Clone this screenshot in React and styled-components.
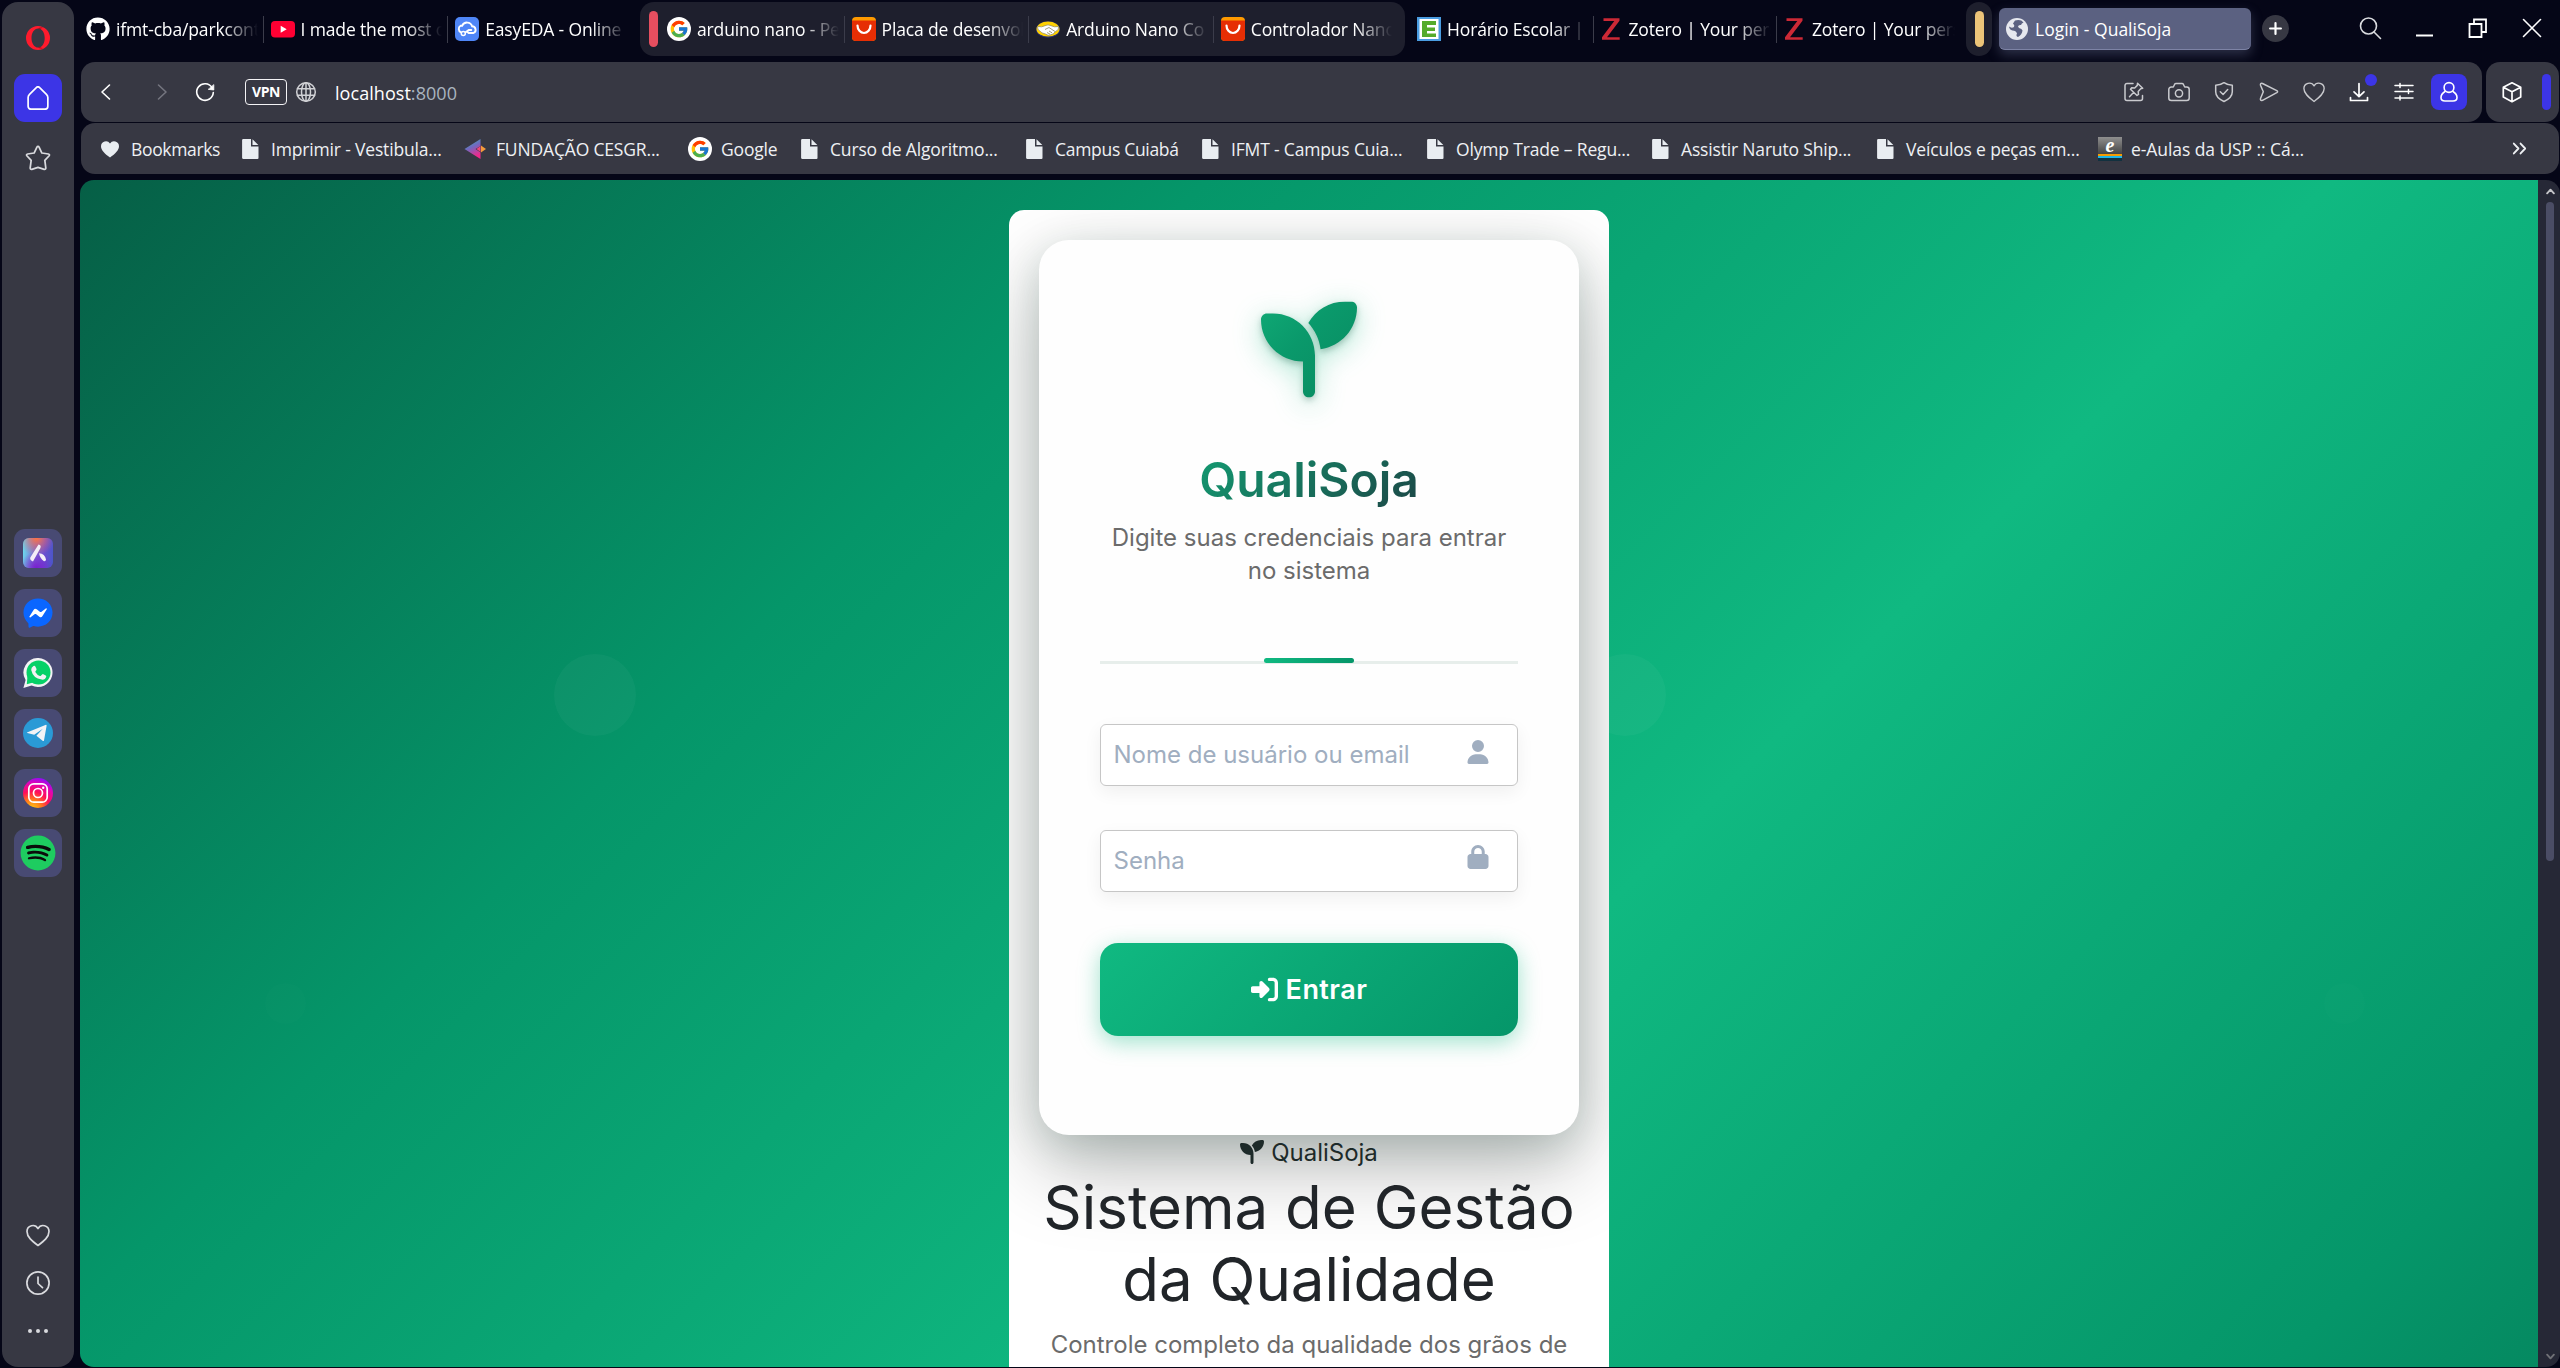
import React from "react";
import styled, { createGlobalStyle } from "styled-components";
import {
  FaSeedling,
  FaUser,
  FaLock,
  FaRightToBracket,
  FaGithub,
  FaFacebookMessenger,
  FaSpotify,
} from "react-icons/fa6";
import { FcGoogle } from "react-icons/fc";

const GlobalStyle = createGlobalStyle`
  * { box-sizing: border-box; }
  body { margin: 0; background: #050617; overflow: hidden; }
  button, input { font: inherit; }
`;

const c = {
  chrome: "#050617",
  panel: "#373843",
  island: "#1e1f2d",
  accent: "#3c35e6",
  icon: "#d9dade",
};

/* ---------- browser frame ---------- */

const Browser = styled.div`
  width: 2560px;
  height: 1368px;
  display: flex;
  padding: 2px 0 1px 2px;
  background: ${c.chrome};
  overflow: hidden;
  font-family: "Open Sans", "Noto Sans", sans-serif;
`;

const Sidebar = styled.nav`
  width: 72px;
  flex: none;
  display: flex;
  flex-direction: column;
  align-items: center;
  background: ${c.panel};
  border-radius: 16px;
  padding: 24px 0 23px;
`;

const SideButton = styled.div`
  width: 48px;
  height: 48px;
  display: flex;
  align-items: center;
  justify-content: center;
  border-radius: 11px;
  color: ${c.icon};
  background: ${(p) => p.$bg || "transparent"};
  svg { display: block; }
`;

const SideTop = styled.div`
  display: flex;
  flex-direction: column;
  align-items: center;
  gap: 12px;
  margin-top: 24px;
`;

const Messengers = styled(SideTop)`
  margin-top: 347px;
`;

const SideBottom = styled(SideTop)`
  gap: 0;
  margin-top: auto;
  margin-bottom: -11px;
`;

const Main = styled.div`
  flex: 1;
  min-width: 0;
  display: flex;
  flex-direction: column;
`;

/* ---------- tab strip ---------- */

const TabStrip = styled.div`
  height: 60px;
  display: flex;
  align-items: flex-start;
  padding-left: 5px;
`;

const TabIsland = styled.div`
  height: 54px;
  display: flex;
  align-items: center;
  border-radius: 14px;
  margin-left: ${(p) => p.$ml || 0}px;
  width: ${(p) => p.$w}px;
  padding-left: ${(p) => p.$pl || 0}px;
  background: ${(p) => (p.$filled ? c.island : "transparent")};
`;

const IslandHandle = styled.div`
  width: 9px;
  height: 36px;
  border-radius: 5px;
  flex: none;
  background: ${(p) => p.$color};
`;

const Tab = styled.div`
  width: ${(p) => p.$w || 184.6}px;
  height: 27px;
  flex: none;
  display: flex;
  align-items: center;
  gap: 6px;
  padding: 0 5px 0 7px;
  color: #fff;
  border-right: 1px solid ${(p) => (p.$last ? "transparent" : "#3b3c4a")};
  svg { flex: none; display: block; }
`;

const TabLabel = styled.span`
  flex: 1;
  font-size: 17.5px;
  line-height: 27px;
  white-space: nowrap;
  overflow: hidden;
  letter-spacing: -0.15px;
  mask-image: linear-gradient(90deg, #000 calc(100% - 36px), transparent);
`;

const ActiveTab = styled.div`
  width: 252px;
  height: 42px;
  margin: 6px 0 0 7px;
  display: flex;
  align-items: center;
  gap: 7px;
  padding-left: 7px;
  border-radius: 6px;
  background: #5b6181;
  border-bottom: 1.5px solid #7d83a5;
  box-shadow: 0 5px 12px rgba(91, 97, 129, 0.45);
  color: #fff;
  font-size: 17.5px;
  letter-spacing: 0;
`;

const NewTab = styled.div`
  width: 27px;
  height: 27px;
  margin: 13px 0 0 11px;
  border-radius: 50%;
  background: ${c.panel};
  display: flex;
  align-items: center;
  justify-content: center;
`;

const WindowControls = styled.div`
  display: flex;
  align-items: center;
  height: 52px;
  margin-left: auto;
  padding-right: 16px;
  gap: 30px;
  svg { display: block; }
`;

/* ---------- toolbars ---------- */

const ToolbarRow = styled.div`
  display: flex;
  gap: 4px;
  height: 60px;
  margin: 0 1px 1px 7px;
`;

const Toolbar = styled.div`
  flex: 1;
  display: flex;
  align-items: center;
  border-radius: 14px;
  background: ${c.panel};
  padding: 0 15px 0 13px;
`;

const MiniPanel = styled.div`
  width: 73px;
  display: flex;
  align-items: center;
  justify-content: space-between;
  border-radius: 14px;
  background: ${c.panel};
  padding: 0 8px 0 14px;
`;

const NavGlyph = styled.div`
  width: 24px;
  height: 24px;
  margin-right: ${(p) => p.$mr || 0}px;
  svg { display: block; }
`;

const VpnBadge = styled.div`
  width: 42px;
  height: 26px;
  border: 1.5px solid #f3f3f5;
  border-radius: 4px;
  color: #fff;
  font-size: 14px;
  font-weight: 700;
  letter-spacing: -0.5px;
  line-height: 24px;
  text-align: center;
  margin-right: 7px;
`;

const Address = styled.div`
  color: #fff;
  font-size: 18px;
  letter-spacing: 0.05px;
  margin-left: 17px;
  padding-top: 1px;
  span { color: #a9b4bf; }
`;

const Actions = styled.div`
  margin-left: auto;
  display: flex;
  align-items: center;
  gap: 21px;
  svg { display: block; }
`;

const ActionSlot = styled.div`
  position: relative;
  width: 24px;
  height: 24px;
`;

const NotifyDot = styled.i`
  position: absolute;
  left: 18px;
  top: -6px;
  width: 12px;
  height: 12px;
  border-radius: 50%;
  background: ${c.accent};
`;

const ProfileButton = styled.div`
  width: 36px;
  height: 36px;
  margin-left: -6px;
  border-radius: 8px;
  background: ${c.accent};
  display: flex;
  align-items: center;
  justify-content: center;
`;

const BookmarkBar = styled.div`
  height: 51px;
  flex: none;
  margin: 0 1px 6px 7px;
  display: flex;
  align-items: center;
  border-radius: 14px;
  background: ${c.panel};
  padding: 0 31px 0 17px;
`;

const Bookmark = styled.div`
  width: ${(p) => p.$w}px;
  flex: none;
  display: flex;
  align-items: center;
  gap: 9px;
  color: #eef0f3;
  font-size: 17.5px;
  white-space: nowrap;
  letter-spacing: ${(p) => p.$ls ?? -0.17}px;
  svg { flex: none; display: block; }
`;

const Overflow = styled.div`
  margin-left: auto;
  svg { display: block; }
`;

/* ---------- page viewport ---------- */

const ViewportRow = styled.div`
  flex: 1;
  min-height: 0;
  display: flex;
  margin-left: 6px;
  border-radius: 14px;
  overflow: hidden;
`;

const Viewport = styled.div`
  flex: 1;
  overflow: hidden;
  font-family: Inter, "Liberation Sans", sans-serif;
`;

const ScrollTrack = styled.div`
  width: 22px;
  background: #262836;
  display: flex;
  flex-direction: column;
  align-items: center;
  padding: 7px 0 6px 2px;
  svg { flex: none; }
`;

const ScrollThumb = styled.div`
  width: 8px;
  height: 659px;
  margin: 6px 0 auto;
  border-radius: 4px;
  background: #4b4d65;
`;

const PageBackground = styled.div`
  position: relative;
  height: 2050px;
  padding-top: 30px;
  background: linear-gradient(135deg, #065f46 0%, #059669 25%, #10b981 50%, #059669 75%, #065f46 100%);
`;

const Bubble = styled.i`
  position: absolute;
  left: ${(p) => p.$x - p.$r}px;
  top: ${(p) => p.$y - p.$r}px;
  width: ${(p) => p.$r * 2}px;
  height: ${(p) => p.$r * 2}px;
  border-radius: 50%;
  background: rgba(255, 255, 255, ${(p) => p.$a});
`;

const Container = styled.main`
  position: relative;
  width: 600px;
  height: 1900px;
  margin: 0 auto;
  padding: 30px;
  border-radius: 15px;
  background: #fff;
  overflow: hidden;
  text-align: center;
`;

const Card = styled.section`
  height: 895px;
  padding: 60px 61px;
  border-radius: 30px;
  background: #fefefe;
  box-shadow: 0 30px 84px rgba(0, 0, 0, 0.27), 0 12px 42px rgba(6, 78, 59, 0.16);
  display: flex;
  flex-direction: column;
`;

const Logo = styled.div`
  height: 97px;
  display: flex;
  justify-content: center;
  filter: drop-shadow(0 3px 3px rgba(0, 60, 40, 0.25)) drop-shadow(0 6px 14px rgba(16, 185, 129, 0.35));
`;

const Title = styled.h1`
  margin: 54px 0 0;
  font-size: 48px;
  font-weight: 600;
  line-height: 57px;
  color: transparent;
  background: linear-gradient(135deg, #10b981 0%, #1f2937 100%);
  background-clip: text;
  -webkit-background-clip: text;
`;

const Subtitle = styled.p`
  margin: 13px 0 0;
  font-size: 24px;
  line-height: 33px;
  color: #6b6b6b;
`;

const Divider = styled.div`
  display: flex;
  justify-content: center;
  margin-top: 74px;
  height: 3px;
  background: #e7eeeb;
`;

const DividerAccent = styled.div`
  width: 90px;
  height: 5px;
  margin-top: -3px;
  border-radius: 3px;
  background: linear-gradient(90deg, #10b981, #059669);
`;

const Field = styled.label`
  height: 62px;
  margin-top: ${(p) => p.$mt}px;
  display: flex;
  align-items: center;
  border: 1px solid #c6c6c6;
  border-radius: 6px;
  background: #fff;
  box-shadow: 0 6px 18px rgba(0, 0, 0, 0.06);
  padding: 0 27.5px 0 12.5px;
  color: #a0aec0;
  svg { flex: none; margin-bottom: ${(p) => p.$lift}px; }
`;

const Input = styled.input`
  flex: 1;
  min-width: 0;
  border: 0;
  padding: 0;
  margin-bottom: 2px;
  outline: none;
  background: transparent;
  font-size: 24px;
  &::placeholder { color: #a0aec0; opacity: 1; }
`;

const SubmitButton = styled.button`
  height: 93px;
  margin-top: 51px;
  border: 0;
  border-radius: 18px;
  display: flex;
  align-items: center;
  justify-content: center;
  gap: 8px;
  color: #fff;
  font-size: 27px;
  font-weight: 600;
  letter-spacing: 0.45px;
  background: linear-gradient(135deg, #10b981 0%, #059669 100%);
  box-shadow: 0 6px 22px rgba(16, 185, 129, 0.4);
`;

const Brand = styled.div`
  height: 36px;
  padding-bottom: 2px;
  display: flex;
  align-items: center;
  justify-content: center;
  gap: 7px;
  color: #1d2a29;
  font-size: 24px;
`;

const Headline = styled.h2`
  margin: 0 -10px;
  font-size: 60px;
  font-weight: 400;
  line-height: 72px;
  color: #212529;
`;

const Lead = styled.p`
  margin: 12px 0 0;
  font-size: 24px;
  line-height: 36px;
  color: #6b6b6b;
`;

/* ---------- drawn icons ---------- */

const Stroke = ({ size = 24, color = "#d9dade", w = 1.5, children }) => (
  <svg width={size} height={size} viewBox="0 0 24 24" fill="none" stroke={color} strokeWidth={w} strokeLinecap="round" strokeLinejoin="round">
    {children}
  </svg>
);

const OperaLogo = () => (
  <svg width="24" height="24" viewBox="0 0 24 24">
    <path fillRule="evenodd" fill="#ff1b2d" d="M12 0a12 12 0 1 0 0 24a12 12 0 1 0 0-24zM12.200 2.400c4 0 6.500 4.300 6.500 9.600s-2.500 9.600-6.500 9.600s-6.700-4.300-6.700-9.600s2.700-9.600 6.700-9.600z" />
    <path fill="#a70e1c" d="M12 2.600c1.400-1 3.300-1.400 5-.5c-1.800-.4-2.800.6-3.200 1.300zM12 21.400c1.400 1 3.300 1.400 5 .5c-1.800.4-2.800-.6-3.200-1.300z" />
  </svg>
);

const AriaIcon = () => (
  <svg width="30" height="30" viewBox="0 0 30 30">
    <defs>
      <linearGradient id="ariaBase" x1="0" y1=".5" x2="1" y2=".6">
        <stop offset="0" stopColor="#6cd8ec" />
        <stop offset=".4" stopColor="#7a6fd0" />
        <stop offset=".7" stopColor="#6a4fd0" />
        <stop offset="1" stopColor="#4b56c8" />
      </linearGradient>
      <radialGradient id="ariaTop" cx=".45" cy="0" r=".6">
        <stop offset="0" stopColor="#ff7340" />
        <stop offset="1" stopColor="#d0628a" stopOpacity="0" />
      </radialGradient>
      <radialGradient id="ariaLow" cx=".45" cy="1" r=".55">
        <stop offset="0" stopColor="#7a1fd0" />
        <stop offset="1" stopColor="#7a1fd0" stopOpacity="0" />
      </radialGradient>
    </defs>
    <rect width="30" height="30" rx="6" fill="url(#ariaBase)" />
    <rect width="30" height="30" rx="6" fill="url(#ariaTop)" />
    <rect width="30" height="30" rx="6" fill="url(#ariaLow)" />
    <path fill="#f3eef7" d="M15.500 6.500q3.200.6 1.800 3.700L10 23.500Q6.500 22 7.300 19.500zM16 15.200q6 .6 7 6.300q0 2-2 1.800q-4-3-5-8.100z" />
  </svg>
);

const WhatsAppIcon = () => (
  <svg width="30" height="30" viewBox="0 0 30 30">
    <path fill="#f2f2f4" d="M15.500 0A14.500 14.500 0 1 1 8.600 27.500L.4 30l2.200-8A14.500 14.500 0 0 1 15.500 0z" />
    <circle cx="15.500" cy="14.600" r="12" fill="#06d167" />
    <path fill="#06d167" d="M4.500 18L3.800 26.300L12 24z" />
    <path fill="#f2f2f4" d="M10.500 8q1.300-.6 2 .7l1 2.300q.3 1-.8 2q-.6.6-.2 1.200q1.600 2.800 4.400 3.800q.7.200 1.200-.5l1-1.100q.5-.5 1.300-.2l2.300 1.200q.8.500.5 1.400q-1 3.200-4.500 2.800Q10 20.400 8.200 12q-.2-2.600 2.300-4z" />
  </svg>
);

const InstagramIcon = () => (
  <svg width="30" height="30" viewBox="0 0 30 30" fill="none">
    <defs>
      <radialGradient id="igFill" cx=".3" cy="1.05" r="1.1">
        <stop offset="0" stopColor="#ffd014" />
        <stop offset=".3" stopColor="#ff7a1a" />
        <stop offset=".55" stopColor="#ff0f5a" />
        <stop offset=".8" stopColor="#e205b4" />
        <stop offset="1" stopColor="#8a0dff" />
      </radialGradient>
    </defs>
    <circle cx="15" cy="15" r="15" fill="url(#igFill)" />
    <rect x="5.800" y="5.800" width="18.400" height="18.400" rx="5" stroke="#fff" strokeWidth="1.700" />
    <circle cx="15" cy="15" r="4.500" stroke="#fff" strokeWidth="1.700" />
    <circle cx="20.200" cy="9.800" r="1.200" fill="#fff" />
  </svg>
);

const MessengerIcon = () => (
  <svg width="30" height="30" viewBox="0 0 30 30">
    <circle cx="15" cy="14.500" r="10" fill="#fff" />
    <FaFacebookMessenger size={30} color="#0a66ff" />
  </svg>
);

const TelegramIcon = () => (
  <svg width="30" height="30" viewBox="0 0 30 30">
    <circle cx="15" cy="15" r="15" fill="#2a9ad6" />
    <path fill="#f3f3f6" d="M4 14.500L23 6.800q.7 0 .6.900L21 22.500q-.4.900-1.400.3l-6.200-5l6.400-7l-8.600 6l-6.900-1.700q-.7-.3-.3-.6z" />
  </svg>
);

const SpotifyIcon = () => (
  <svg width="36" height="36" viewBox="0 0 36 36">
    <circle cx="18" cy="18" r="15" fill="#0b0b0b" />
    <FaSpotify size={36} color="#1ecc60" />
  </svg>
);

const YoutubeIcon = () => (
  <svg width="24" height="24" viewBox="0 0 24 24">
    <rect y="4" width="24" height="16.500" rx="4" fill="#ff0033" />
    <path fill="#fff" d="M9.700 8.700l6 3.500l-6 3.500z" />
  </svg>
);

const EasyEdaIcon = () => (
  <svg width="24" height="24" viewBox="0 0 24 24" fill="none">
    <rect width="24" height="24" rx="5" fill="#4f86f7" />
    <path d="M6 15.300a3.700 3.700 0 0 1-.4-6.600h1.600a5.300 5.300 0 0 1 9.900.6a3.500 3.500 0 0 1 1.400 6.700h-4.800l-2-1.600M9.500 16l4.300-3h2.500" stroke="#fff" strokeWidth="1.900" strokeLinecap="round" />
    <circle cx="8.300" cy="16.500" r="2" fill="#4f86f7" stroke="#fff" strokeWidth="1.500" />
  </svg>
);

const GoogleIcon = () => (
  <svg width="24" height="24" viewBox="0 0 24 24">
    <circle cx="12" cy="12" r="12" fill="#fff" />
    <FcGoogle x="2" y="2" size={20} />
  </svg>
);

const AliIcon = () => (
  <svg width="24" height="24" viewBox="0 0 24 24">
    <rect width="24" height="24" rx="4" fill="#ff9a00" />
    <path fill="#e62e04" d="M0 3.500h24V20a4 4 0 0 1-4 4H4a4 4 0 0 1-4-4z" />
    <path d="M5.500 8.500a6.500 7.500 0 0 0 13 0" fill="none" stroke="#fff" strokeWidth="2.200" strokeLinecap="round" />
  </svg>
);

const MercadoIcon = () => (
  <svg width="24" height="24" viewBox="0 0 24 24">
    <ellipse cx="12" cy="12.500" rx="12" ry="8.200" fill="#2d3277" />
    <ellipse cx="12" cy="12" rx="11.500" ry="7.600" fill="#ffd100" />
    <path fill="#fff" stroke="#8c8558" strokeWidth=".7" d="M1.500 9.500q4.500 1 7.500-.8q3-1.700 6 0q3.500 1.800 7.500.8q1 3.500-3 5q-2 3-4.500 3.200q-3 1.600-5.500-.7Q5 16 4.500 14.500Q1 13 1.500 9.500z" />
    <path fill="none" stroke="#8c8558" strokeWidth=".8" d="M9 12.500l4-2l6 4M11 15.500l3 1.600M13 14l3 1.800" />
  </svg>
);

const HorarioIcon = () => (
  <svg width="24" height="24" viewBox="0 0 24 24">
    <rect width="24" height="24" fill="#4a9ce0" />
    <rect x="2.500" y="2" width="19" height="20" fill="#fff" />
    <path fill="#55ab2c" d="M5 4h14v4h-9v2.500h8v3.500h-8v2.500h9V20H5z" />
  </svg>
);

const ZoteroIcon = () => (
  <svg width="22" height="24" viewBox="0 0 22 24">
    <path fill="#cc2936" d="M2.500 1.200h16v2.600L6 20.200h12.700v2.600H1v-2.600L13.300 3.900H2.500z" />
  </svg>
);

const EarthIcon = () => (
  <svg width="22" height="22" viewBox="0 0 22 22">
    <circle cx="11" cy="11" r="11" fill="#e6e8ee" />
    <path fill="#5b6181" d="M9 2.500q6-1.500 8.500 2q-2 .5-2.500 2.500q-2.500-.5-3 1.500l1 1.500q3 .5 3.500 2.500q-.5 4-4.500 6.500q-2.500-1-1-3.500q-1-3-4.500-3q-3-.5-3.500-4q2.500 2 5 .5q1-2-1-3.500q1-1.500 2-3z" />
  </svg>
);

const DocIcon = () => (
  <svg width="24" height="24" viewBox="0 0 24 24">
    <path fill="#e9edf1" d="M5.500 2H13v7.500h7.500V21a1 1 0 0 1-1 1h-14a1.400 1.400 0 0 1-1.400-1V3a1.200 1.200 0 0 1 1.400-1zM14.500 2.300L20.300 8h-5.800z" />
  </svg>
);

const HeartFilled = () => (
  <svg width="24" height="24" viewBox="0 0 24 24">
    <path fill="#e9edf1" d="M12 20.500C6.500 16.500 3 13 3 9.200A4.900 4.900 0 0 1 12 6.600A4.900 4.900 0 0 1 21 9.200c0 3.800-3.500 7.300-9 11.300z" />
  </svg>
);

const CesgranrioIcon = () => (
  <svg width="24" height="24" viewBox="0 0 24 24">
    <defs>
      <linearGradient id="cesg" x1="0" y1="0" x2=".4" y2="1">
        <stop offset="0" stopColor="#35c6a8" />
        <stop offset=".5" stopColor="#6f6ac0" />
        <stop offset="1" stopColor="#f0288c" />
      </linearGradient>
    </defs>
    <path fill="url(#cesg)" d="M1.500 12L17.500 2v7L12.500 12l5 3.500V22z" />
    <path fill="#f2477a" d="M13.500 12l4-3v6z" />
    <path fill="#f59a3c" d="M18 8.500l5 3.500l-5 3.500z" />
  </svg>
);

const EAulasBox = styled.div`
  width: 24px;
  height: 24px;
  flex: none;
  background: linear-gradient(
    #8f8f8f 0,
    #454545 17px,
    #f59b00 17px,
    #f59b00 19px,
    #1db4e8 19px,
    #1db4e8 21px,
    #12313f 21px
  );
  color: #fff;
  font: italic 700 20px/16px "Liberation Serif", serif;
  letter-spacing: 0;
  text-align: center;
`;

const GlobeIcon = () => (
  <Stroke color="#d0d1d5" w={1.5}>
    <circle cx="12" cy="12" r="9.300" />
    <ellipse cx="12" cy="12" rx="4.500" ry="9.300" />
    <path d="M12 2.700v18.600M3.500 8.700h17M3.500 15.300h17" />
  </Stroke>
);

const HeartPath = () => (
  <path d="M12 22.500C6 18 1 14 1 8.500a5.900 5.900 0 0 1 11-3a5.900 5.900 0 0 1 11 3c0 5.500-5 9.500-11 14z" />
);

/* ---------- data ---------- */

const firstTabs = [
  { icon: <FaGithub size={24} color="#fff" />, label: "ifmt-cba/parkcont" },
  { icon: <YoutubeIcon />, label: "I made the most o" },
  { icon: <EasyEdaIcon />, label: "EasyEDA - Online" },
];
const islandTabs = [
  { icon: <GoogleIcon />, label: "arduino nano - Pe" },
  { icon: <AliIcon />, label: "Placa de desenvol" },
  { icon: <MercadoIcon />, label: "Arduino Nano Co" },
  { icon: <AliIcon />, label: "Controlador Nano" },
];
const lastTabs = [
  { icon: <HorarioIcon />, label: "Horário Escolar | I", w: 183.5 },
  { icon: <ZoteroIcon />, label: "Zotero | Your pers", w: 183.5 },
  { icon: <ZoteroIcon />, label: "Zotero | Your pers", w: 183.5 },
];

const bookmarks = [
  { icon: <HeartFilled />, label: "Bookmarks", w: 140, ls: -0.35 },
  { icon: <DocIcon />, label: "Imprimir - Vestibula...", w: 225 },
  { icon: <CesgranrioIcon />, label: "FUNDAÇÃO CESGR...", w: 225 },
  { icon: <GoogleIcon />, label: "Google", w: 109 },
  { icon: <DocIcon />, label: "Curso de Algoritmo...", w: 225 },
  { icon: <DocIcon />, label: "Campus Cuiabá", w: 176, ls: -0.3 },
  { icon: <DocIcon />, label: "IFMT - Campus Cuia...", w: 225 },
  { icon: <DocIcon />, label: "Olymp Trade – Regu...", w: 225 },
  { icon: <DocIcon />, label: "Assistir Naruto Ship...", w: 225 },
  { icon: <DocIcon />, label: "Veículos e peças em...", w: 225 },
  { icon: <EAulasBox>e</EAulasBox>, label: "e-Aulas da USP :: Cá...", w: 225, ls: -0.08 },
];

const messengers = [AriaIcon, MessengerIcon, WhatsAppIcon, TelegramIcon, InstagramIcon, SpotifyIcon];

const renderTabs = (tabs) =>
  tabs.map((t, i) => (
    <Tab key={i} $w={t.w} $last={i === tabs.length - 1}>
      {t.icon}
      <TabLabel>{t.label}</TabLabel>
    </Tab>
  ));

export default function App() {
  return (
    <Browser>
      <GlobalStyle />
      <Sidebar>
        <OperaLogo />
        <SideTop>
          <SideButton $bg={c.accent}>
            <Stroke color="#fff" w={1.8}>
              <path d="M12 .8q.8 0 1.500.6l7.500 7q1.500 1.400 1.500 3.200v8.600a3 3 0 0 1-3 3h-15a3 3 0 0 1-3-3v-8.600q0-1.800 1.500-3.200l7.500-7q.7-.6 1-.6z" transform="translate(.7 0) scale(.94 1)" />
            </Stroke>
          </SideButton>
          <SideButton>
            <Stroke size={26} w={1.6}>
              <path d="M12 1.300q.7 0 1.100.8l2.500 5.300l6 .9q1.500.4.7 1.600l-4 4.300l.9 7q0 1.600-1.500 1.300L12 20.700l-5.700 1.800q-1.500.3-1.500-1.300l.9-7l-4-4.300q-.8-1.200.7-1.600l6-.9l2.500-5.300q.4-.8 1.100-.8z" />
            </Stroke>
          </SideButton>
        </SideTop>
        <Messengers>
          {messengers.map((Icon, i) => (
            <SideButton key={i} $bg="#484a73"><Icon /></SideButton>
          ))}
        </Messengers>
        <SideBottom>
          <SideButton>
            <Stroke w={1.7}><HeartPath /></Stroke>
          </SideButton>
          <SideButton>
            <Stroke w={1.7}>
              <circle cx="12" cy="12" r="11.100" />
              <path d="M12 6v6.500l4.500 4.200" />
            </Stroke>
          </SideButton>
          <SideButton>
            <svg width="24" height="24" viewBox="0 0 24 24" fill="#d9dade">
              <circle cx="4" cy="12" r="2" />
              <circle cx="12" cy="12" r="2" />
              <circle cx="20" cy="12" r="2" />
            </svg>
          </SideButton>
        </SideBottom>
      </Sidebar>

      <Main>
        <TabStrip>
          <TabIsland $w={561}>{renderTabs(firstTabs)}</TabIsland>
          <TabIsland $filled $w={765} $pl={9}>
            <IslandHandle $color="#e54e5f" />
            <TabIsland $w={740} $ml={2}>{renderTabs(islandTabs)}</TabIsland>
          </TabIsland>
          <TabIsland $w={556} $ml={5}>{renderTabs(lastTabs)}</TabIsland>
          <TabIsland $filled $w={26} $pl={9}>
            <IslandHandle $color="#ecc478" />
          </TabIsland>
          <ActiveTab>
            <EarthIcon />
            Login - QualiSoja
          </ActiveTab>
          <NewTab>
            <Stroke size={13} color="#fff" w={4}><path d="M12 2v20M2 12h20" /></Stroke>
          </NewTab>
          <WindowControls>
            <Stroke color="#d9dade" w={1.6}>
              <circle cx="10.500" cy="10" r="8" />
              <path d="M16 16l6.500 6.500" />
            </Stroke>
            <Stroke color="#fff" w={2}><path d="M4 19.500h17" strokeLinecap="butt" /></Stroke>
            <Stroke color="#fff" w={1.8}>
              <path d="M3.500 8h12v13h-12zM8 8V3.500h12V16h-4.500" strokeLinejoin="miter" />
            </Stroke>
            <Stroke color="#fff" w={1.6}><path d="M3.500 3.500l17 17M20.500 3.500l-17 17" /></Stroke>
          </WindowControls>
        </TabStrip>

        <ToolbarRow>
          <Toolbar>
            <NavGlyph $mr={32}><Stroke color="#fff" w={1.6}><path d="M15.500 5l-7.500 7l7.500 7" /></Stroke></NavGlyph>
            <NavGlyph $mr={19}><Stroke color="#74757f" w={1.6}><path d="M8.500 5l7.500 7l-7.500 7" /></Stroke></NavGlyph>
            <NavGlyph $mr={28}>
              <Stroke color="#fff" w={1.6}>
                <path d="M19 7.500a8.300 8.300 0 1 0 1.300 5" />
                <path fill="#fff" strokeWidth=".8" d="M20.800 5v5l-5.200-.6z" />
              </Stroke>
            </NavGlyph>
            <VpnBadge>VPN</VpnBadge>
            <NavGlyph><GlobeIcon /></NavGlyph>
            <Address>localhost<span>:8000</span></Address>
            <Actions>
              <ActionSlot>
                <Stroke color="#c9cace">
                  <path d="M11 3.500H5a2 2 0 0 0-2 2v13a2 2 0 0 0 2 2h13.500a2 2 0 0 0 2-2v-3" />
                  <path d="M15.500 3.300l5.200 5l-2 .4l-2.500 2.800l.3 3l-1.500 1l-6.500-6.200l1.200-1.500l3 .2l2.600-2.600zM11.700 12.300L7.500 16.800" />
                </Stroke>
              </ActionSlot>
              <ActionSlot>
                <Stroke color="#c9cace">
                  <path d="M1.800 9.500a2.500 2.500 0 0 1 2.500-2.500h2l1.500-3q.4-.6 1.200-.6h6q.8 0 1.200.6l1.500 3h2a2.500 2.500 0 0 1 2.500 2.500v8.500a2.500 2.500 0 0 1-2.500 2.500H4.300a2.500 2.500 0 0 1-2.500-2.500z" />
                  <circle cx="12" cy="13.300" r="3.600" />
                </Stroke>
              </ActionSlot>
              <ActionSlot>
                <Stroke color="#c9cace">
                  <path d="M12 2.700q3.500 2.600 8.300 2.600v6.500q0 6-8.300 9.700q-8.300-3.700-8.300-9.700V5.300q4.800 0 8.300-2.600z" />
                  <path d="M8.300 11.800l2.800 2.700l4.600-5" />
                </Stroke>
              </ActionSlot>
              <ActionSlot>
                <Stroke color="#c9cace">
                  <path d="M5.500 3.500l14.300 7.200q1.600 1 0 2L5.500 20.300q-2.500.8-2-1.800l2.800-6.700L3.500 5.200q-.4-2.500 2-1.700z" />
                </Stroke>
              </ActionSlot>
              <ActionSlot><Stroke color="#c9cace"><g transform="translate(1 .8) scale(.92)"><HeartPath /></g></Stroke></ActionSlot>
              <ActionSlot>
                <Stroke color="#fff" w={1.7}>
                  <path d="M12 3.500v13M7 11.800l5 4.800l5-4.800M3.500 17.500v3h17v-3" />
                </Stroke>
                <NotifyDot />
              </ActionSlot>
              <ActionSlot>
                <Stroke color="#fff" w={1.5}>
                  <path d="M3 5.500h18M3 11.500h18M3 18h18M8 3.500v4M16.500 9.500v4M8 16v4" />
                </Stroke>
              </ActionSlot>
              <ProfileButton>
                <Stroke color="#fff" w={1.6}>
                  <circle cx="12" cy="7.500" r="4.900" />
                  <path d="M8 11.500q-4 2.500-4 6q0 3.500 4 3.500h8q4 0 4-3.500q0-3.500-4-6" />
                </Stroke>
              </ProfileButton>
            </Actions>
          </Toolbar>
          <MiniPanel>
            <Stroke color="#fff" w={1.7}>
              <path d="M12 2.800l8.700 4.500v9.800L12 21.700l-8.700-4.600V7.300zM3.300 7.300l8.700 4.500l8.700-4.500M12 11.800v9.900" />
            </Stroke>
            <IslandHandle $color={c.accent} />
          </MiniPanel>
        </ToolbarRow>

        <BookmarkBar>
          {bookmarks.map((b) => (
            <Bookmark key={b.label} $w={b.w} $ls={b.ls}>
              {b.icon}
              <span>{b.label}</span>
            </Bookmark>
          ))}
          <Overflow>
            <Stroke size={17} color="#eef0f3" w={2.6}><path d="M4 5l6.500 7l-6.500 7M13.500 5l6.500 7l-6.500 7" /></Stroke>
          </Overflow>
        </BookmarkBar>

        <ViewportRow>
          <Viewport>
            <PageBackground>
              <Bubble $x={514.5} $y={514.5} $r={41} $a={0.035} />
              <Bubble $x={1544.5} $y={514.5} $r={41} $a={0.035} />
              <Bubble $x={205.5} $y={823} $r={20.5} $a={0.012} />
              <Bubble $x={2264.5} $y={823} $r={20.5} $a={0.012} />
              <Container>
                <Card>
                  <Logo>
                    <svg width="96" height="98" viewBox="0 0 96 98">
                      <defs>
                        <linearGradient id="leaf" x1="0" y1="0" x2="1" y2="1">
                          <stop offset="0" stopColor="#10a975" />
                          <stop offset=".4" stopColor="#0a996b" />
                          <stop offset="1" stopColor="#088a60" />
                        </linearGradient>
                      </defs>
                      <FaSeedling y="1.5" size={96} fill="url(#leaf)" />
                    </svg>
                  </Logo>
                  <Title>QualiSoja</Title>
                  <Subtitle>Digite suas credenciais para entrar<br />no sistema</Subtitle>
                  <Divider><DividerAccent /></Divider>
                  <Field $mt={60} $lift={7}>
                    <Input placeholder="Nome de usuário ou email" />
                    <FaUser size={24} />
                  </Field>
                  <Field $mt={44} $lift={9}>
                    <Input placeholder="Senha" />
                    <FaLock size={24} />
                  </Field>
                  <SubmitButton>
                    <FaRightToBracket size={27} />
                    Entrar
                  </SubmitButton>
                </Card>
                <Brand><FaSeedling size={24} /> QualiSoja</Brand>
                <Headline>Sistema de Gestão<br />da Qualidade</Headline>
                <Lead>Controle completo da qualidade dos grãos de</Lead>
              </Container>
            </PageBackground>
          </Viewport>
          <ScrollTrack>
            <Stroke size={9} color="#c4c4c8" w={5}><path d="M3 17l9-10l9 10" /></Stroke>
            <ScrollThumb />
            <Stroke size={9} color="#6f7076" w={5}><path d="M3 7l9 10l9-10" /></Stroke>
          </ScrollTrack>
        </ViewportRow>
      </Main>
    </Browser>
  );
}
